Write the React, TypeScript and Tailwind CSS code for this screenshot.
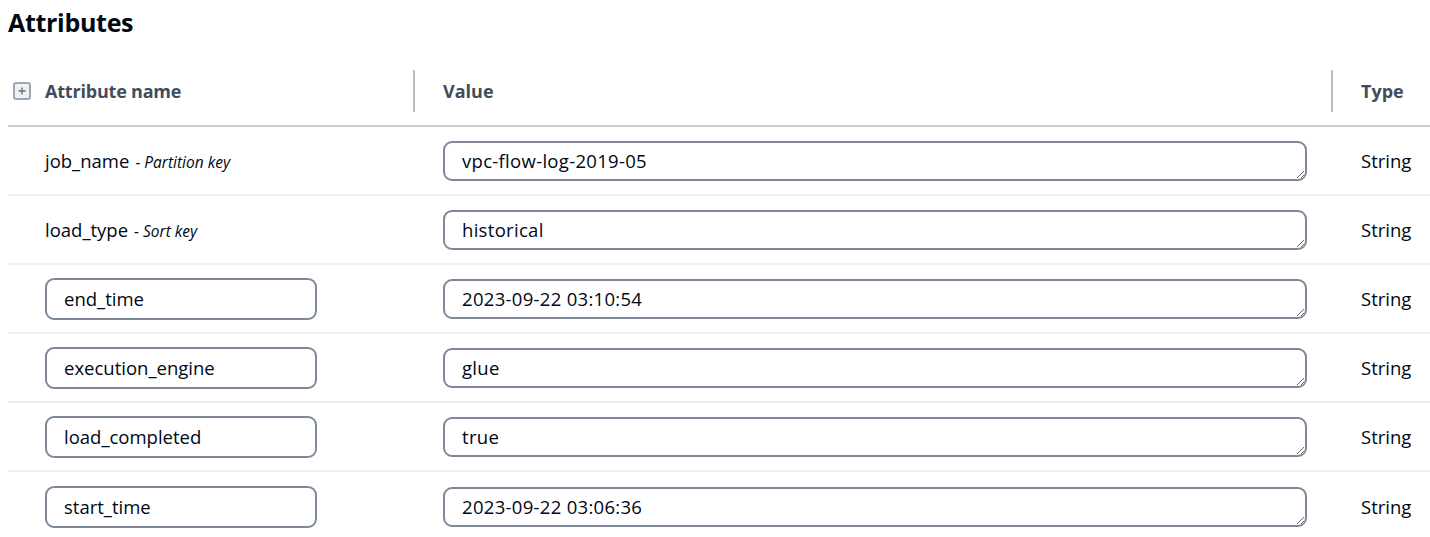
import React from "react";

const rows = [
  { name: "job_name", key: "Partition key", value: "vpc-flow-log-2019-05" },
  { name: "load_type", key: "Sort key", value: "historical" },
  { name: "end_time", value: "2023-09-22 03:10:54" },
  { name: "execution_engine", value: "glue" },
  { name: "load_completed", value: "true" },
  { name: "start_time", value: "2023-09-22 03:06:36" },
];

export default function App() {
  return (
    <div className="w-[1430px] h-[537px] bg-white overflow-hidden text-[#000716]" style={{ fontFamily: '"Open Sans", "Noto Sans", sans-serif' }}>
      <h2 className="pl-[8px] pt-[6px] text-[25px] leading-[33px] font-bold tracking-[-0.3px]">Attributes</h2>
      <div className="ml-[8px] mt-[18px]">
        <div className="grid grid-cols-[407px_918px_1fr] h-[70px] border-b-2 border-[#c6ccd4] items-center text-[18px] font-bold text-[#414d5c]">
          <div className="flex items-center h-[42px] border-r-2 border-[#b6bec9] pl-[5px]">
            <span className="w-[18px] h-[18px] rounded-[3px] border-2 border-[#9ba7b6] bg-[#eef0f2] flex items-center justify-center mr-[14px]">
              <svg width="10" height="10" viewBox="0 0 10 10">
                <path d="M5 1.5V8.5M1.5 5H8.5" stroke="#7d8998" strokeWidth="1.8" />
              </svg>
            </span>
            <span className="tracking-[-0.2px]">Attribute name</span>
          </div>
          <div className="flex items-center h-[42px] border-r-2 border-[#b6bec9] pl-[28px]">Value</div>
          <div className="pl-[28px]">Type</div>
        </div>
        {rows.map((r, i) => (
          <div key={r.name} className={"grid grid-cols-[407px_918px_1fr] h-[69px] items-center text-[18.5px] " + (i < rows.length - 1 ? "border-b-2 border-[#eceef0]" : "")}>
            <div className="pl-[37px]">
              {r.key ? (
                <span>
                  {r.name}
                  <span className="text-[15.5px] italic ml-[6px]">- {r.key}</span>
                </span>
              ) : (
                <div className="w-[272px] h-[42px] border-2 border-[#7d8998] rounded-[9px] flex items-center pl-[17px]">{r.name}</div>
              )}
            </div>
            <div className="pl-[28px]">
              <textarea
                readOnly
                rows={1}
                defaultValue={r.value}
                className="block w-[864px] h-[40px] border-2 border-[#7d8998] rounded-[9px] pl-[17px] pt-[6px] leading-[24px] text-[18.5px] tracking-[0.3px] outline-none resize-y overflow-hidden text-[#000716]"
                style={{ fontFamily: '"Open Sans", "Noto Sans", sans-serif' }}
              />
            </div>
            <div className="pl-[28px]">String</div>
          </div>
        ))}
      </div>
    </div>
  );
}
